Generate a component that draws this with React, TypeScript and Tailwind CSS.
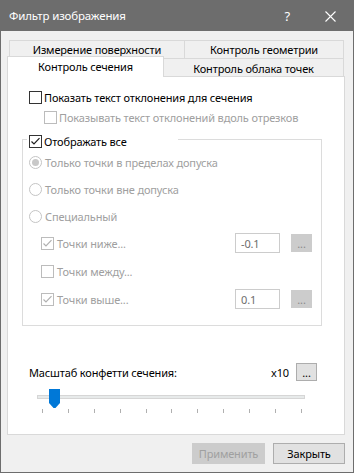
import React from "react";

const font = { fontFamily: '"Noto Sans", "Segoe UI", sans-serif' };

function CheckBox({ checked, disabled }: { checked?: boolean; disabled?: boolean }) {
  const c = disabled ? "#bcbcbc" : "#333333";
  const m = disabled ? "#b0b0b0" : "#1e1e1e";
  return (
    <svg width="13" height="13" viewBox="0 0 13 13" className="shrink-0">
      <rect x="0.5" y="0.5" width="12" height="12" fill="white" stroke={c} />
      {checked && <path d="M2.5 6.5 L5 9 L10.5 3.2" fill="none" stroke={m} strokeWidth="1.2" />}
    </svg>
  );
}

function Radio({ checked }: { checked?: boolean }) {
  return (
    <svg width="13" height="13" viewBox="0 0 13 13" className="shrink-0">
      <circle cx="6.5" cy="6.5" r="6" fill="white" stroke="#c4c4c4" />
      {checked && <circle cx="6.5" cy="6.5" r="3.5" fill="#c8c8c8" />}
    </svg>
  );
}

export default function App() {
  const ticks = Array.from({ length: 11 });
  return (
    <div
      style={font}
      className="w-[354px] h-[473px] border border-[#6d6d6d] bg-[#f0f0f0] flex flex-col text-[11px] tracking-[-0.15px] text-black leading-none overflow-hidden"
    >
      {/* Title bar */}
      <div className="h-[30px] bg-[#6d6d6d] flex items-center pl-[8px] pr-[17px] text-white shrink-0">
        <span className="text-[11.5px]">Фильтр изображения</span>
        <span className="ml-auto text-[13px]">?</span>
        <svg width="11" height="11" viewBox="0 0 11 11" className="ml-[35px]">
          <path d="M0.5 0.5 L10.5 10.5 M10.5 0.5 L0.5 10.5" stroke="white" strokeWidth="1.1" />
        </svg>
      </div>

      {/* Tabs row 1 */}
      <div className="mt-[9px] flex pl-[8px] shrink-0">
        <div className="w-[176px] h-[18px] border-l border-t border-r border-[#d9d9d9] flex items-center justify-center">
          Измерение поверхности
        </div>
        <div className="w-[159px] h-[18px] border-t border-r border-[#d9d9d9] flex items-center justify-center">
          Контроль геометрии
        </div>
      </div>
      {/* Tabs row 2 */}
      <div className="flex pl-[6px] h-[18px] shrink-0">
        <div className="relative z-10 w-[157px] h-[21px] mt-[-2px] bg-white border-l border-t border-r border-[#d9d9d9] flex items-center justify-center pb-[1px]">
          Контроль сечения
        </div>
        <div className="w-[180px] h-[18px] border-t border-r border-[#d9d9d9] flex items-center justify-center pt-[1px]">
          Контроль облака точек
        </div>
      </div>

      {/* Panel */}
      <div className="ml-[6px] w-[338px] h-[359px] border border-[#d9d9d9] bg-white flex flex-col shrink-0">
        <div className="mt-[10px] h-[20px] pl-[21px] flex items-center gap-[2px]">
          <CheckBox />
          <span>Показать текст отклонения для сечения</span>
        </div>
        <div className="h-[20px] pl-[36px] flex items-center gap-[2px] text-[#a0a0a0]">
          <CheckBox disabled />
          <span>Показывать текст отклонений вдоль отрезков</span>
        </div>

        {/* Group box */}
        <div className="relative mt-[12px] ml-[14px] w-[300px] border border-[#dcdcdc] pt-[12px] pb-[16px] flex flex-col">
          <div className="absolute top-[-9px] left-[4px] w-[151px] h-[20px] bg-white flex items-center pl-[2px] gap-[2px]">
            <CheckBox checked />
            <span>Отображать все</span>
          </div>
          <div className="h-[20px] pl-[6px] flex items-center gap-[3px] text-[#a0a0a0]">
            <Radio checked />
            <span>Только точки в пределах допуска</span>
          </div>
          <div className="mt-[7px] h-[20px] pl-[6px] flex items-center gap-[3px] text-[#a0a0a0]">
            <Radio />
            <span>Только точки вне допуска</span>
          </div>
          <div className="mt-[7px] h-[20px] pl-[6px] flex items-center gap-[3px] text-[#a0a0a0]">
            <Radio />
            <span>Специальный</span>
          </div>
          <div className="mt-[7px] h-[20px] pl-[18px] pr-[9px] flex items-center gap-[3px] text-[#a0a0a0]">
            <CheckBox checked disabled />
            <span>Точки ниже...</span>
            <div className="ml-auto w-[45px] h-[20px] border border-[#cccccc] flex items-center pl-[5px] text-[#6d6d6d]">
              -0.1
            </div>
            <div className="ml-[8px] w-[21px] h-[18px] bg-[#cccccc] flex items-center justify-center text-[#8a8a8a]">
              ...
            </div>
          </div>
          <div className="mt-[8px] h-[20px] pl-[18px] flex items-center gap-[3px] text-[#a0a0a0]">
            <CheckBox disabled />
            <span>Точки между...</span>
          </div>
          <div className="mt-[8px] h-[20px] pl-[18px] pr-[9px] flex items-center gap-[3px] text-[#a0a0a0]">
            <CheckBox checked disabled />
            <span>Точки выше...</span>
            <div className="ml-auto w-[45px] h-[20px] border border-[#cccccc] flex items-center pl-[5px] text-[#6d6d6d]">
              0.1
            </div>
            <div className="ml-[8px] w-[21px] h-[18px] bg-[#cccccc] flex items-center justify-center text-[#8a8a8a]">
              ...
            </div>
          </div>
        </div>

        {/* Scale */}
        <div className="mt-[36px] h-[20px] pl-[21px] pr-[27px] flex items-center">
          <span>Масштаб конфетти сечения:</span>
          <span className="ml-auto">x10</span>
          <div className="ml-[7px] w-[21px] h-[18px] bg-[#e1e1e1] border border-[#adadad] flex items-center justify-center">
            ...
          </div>
        </div>

        {/* Slider */}
        <div className="relative mt-[7px] ml-[29px] w-[268px] h-[20px]">
          <div className="mt-[6px] h-[4px] bg-[#e7eaea] border border-[#d6d6d6]" />
          <svg width="11" height="19" viewBox="0 0 11 19" className="absolute top-0 left-[12px]">
            <polygon points="0,0 11,0 11,14 6.5,19 4.5,19 0,14" fill="#0078d7" />
          </svg>
        </div>
        <div className="ml-[34px] w-[260px] h-[4px] flex justify-between">
          {ticks.map((_, i) => (
            <div key={i} className="w-[1px] h-[4px] bg-[#b0b0b0]" />
          ))}
        </div>
      </div>

      {/* Bottom buttons */}
      <div className="mt-[8px] flex justify-end gap-[8px] pr-[8px]">
        <div className="w-[73px] h-[21px] bg-[#cccccc] border border-[#cccccc] flex items-center justify-center text-[#a0a0a0]">
          Применить
        </div>
        <div className="w-[72px] h-[21px] bg-[#e1e1e1] border border-[#adadad] flex items-center justify-center">
          Закрыть
        </div>
      </div>
    </div>
  );
}
